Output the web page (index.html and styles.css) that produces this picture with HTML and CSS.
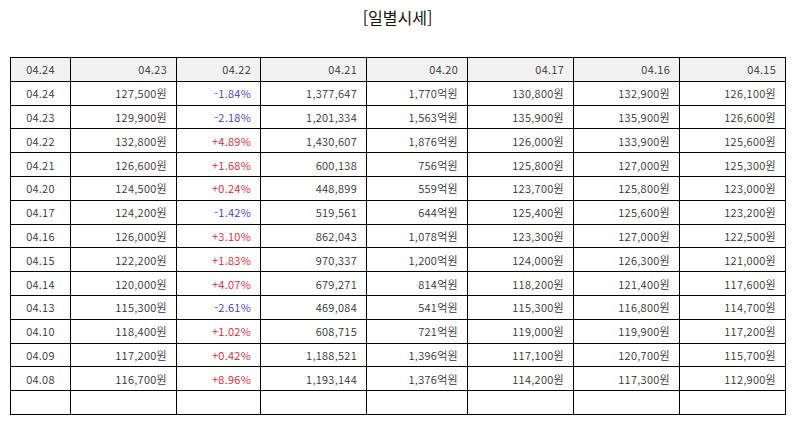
FILE: index.html
```html
<!DOCTYPE html>
<html lang="ko">
<head>
<meta charset="utf-8">
<link rel="stylesheet" href="styles.css">
</head>
<body>
<div class="page">
  <h1 class="title">[일별시세]</h1>
  <table class="prices">
    <colgroup>
      <col style="width:60px"><col style="width:106px"><col style="width:84px"><col style="width:106px"><col style="width:101px"><col style="width:106px"><col style="width:106px"><col style="width:106px">
    </colgroup>
    <thead>
      <tr><th class="c">04.24</th><th>04.23</th><th>04.22</th><th>04.21</th><th>04.20</th><th>04.17</th><th>04.16</th><th>04.15</th></tr>
    </thead>
    <tbody>
      <tr><td class="c">04.24</td><td>127,500원</td><td class="dn">-1.84%</td><td>1,377,647</td><td>1,770억원</td><td>130,800원</td><td>132,900원</td><td>126,100원</td></tr>
      <tr><td class="c">04.23</td><td>129,900원</td><td class="dn">-2.18%</td><td>1,201,334</td><td>1,563억원</td><td>135,900원</td><td>135,900원</td><td>126,600원</td></tr>
      <tr><td class="c">04.22</td><td>132,800원</td><td class="up">+4.89%</td><td>1,430,607</td><td>1,876억원</td><td>126,000원</td><td>133,900원</td><td>125,600원</td></tr>
      <tr><td class="c">04.21</td><td>126,600원</td><td class="up">+1.68%</td><td>600,138</td><td>756억원</td><td>125,800원</td><td>127,000원</td><td>125,300원</td></tr>
      <tr><td class="c">04.20</td><td>124,500원</td><td class="up">+0.24%</td><td>448,899</td><td>559억원</td><td>123,700원</td><td>125,800원</td><td>123,000원</td></tr>
      <tr><td class="c">04.17</td><td>124,200원</td><td class="dn">-1.42%</td><td>519,561</td><td>644억원</td><td>125,400원</td><td>125,600원</td><td>123,200원</td></tr>
      <tr><td class="c">04.16</td><td>126,000원</td><td class="up">+3.10%</td><td>862,043</td><td>1,078억원</td><td>123,300원</td><td>127,000원</td><td>122,500원</td></tr>
      <tr><td class="c">04.15</td><td>122,200원</td><td class="up">+1.83%</td><td>970,337</td><td>1,200억원</td><td>124,000원</td><td>126,300원</td><td>121,000원</td></tr>
      <tr><td class="c">04.14</td><td>120,000원</td><td class="up">+4.07%</td><td>679,271</td><td>814억원</td><td>118,200원</td><td>121,400원</td><td>117,600원</td></tr>
      <tr><td class="c">04.13</td><td>115,300원</td><td class="dn">-2.61%</td><td>469,084</td><td>541억원</td><td>115,300원</td><td>116,800원</td><td>114,700원</td></tr>
      <tr><td class="c">04.10</td><td>118,400원</td><td class="up">+1.02%</td><td>608,715</td><td>721억원</td><td>119,000원</td><td>119,900원</td><td>117,200원</td></tr>
      <tr><td class="c">04.09</td><td>117,200원</td><td class="up">+0.42%</td><td>1,188,521</td><td>1,396억원</td><td>117,100원</td><td>120,700원</td><td>115,700원</td></tr>
      <tr><td class="c">04.08</td><td>116,700원</td><td class="up">+8.96%</td><td>1,193,144</td><td>1,376억원</td><td>114,200원</td><td>117,300원</td><td>112,900원</td></tr>
      <tr><td class="c"></td><td></td><td></td><td></td><td></td><td></td><td></td><td></td></tr>
    </tbody>
  </table>
</div>
</body>
</html>
```
FILE: styles.css
```css
html, body {
  margin: 0;
  padding: 0;
  background: #fff;
}
.page {
  padding: 0 9px 0 10px;
  font-family: "Noto Sans CJK KR", "Noto Sans", sans-serif;
  color: #333;
}
.title {
  margin: 0;
  height: 57px;
  padding-top: 5px;
  box-sizing: border-box;
  text-align: center;
  font-size: 16px;
  font-weight: normal;
  line-height: 24px;
  color: #111;
}
.prices {
  width: 775px;
  border-collapse: collapse;
  table-layout: fixed;
  font-size: 11px;
  letter-spacing: 0.3px;
}
.prices th, .prices td {
  border: 1px solid #000;
  height: 22.8px;
  padding: 0 9px 0 4px;
  text-align: right;
  font-weight: 350;
  line-height: 14px;
  white-space: nowrap;
}
.prices th {
  background: #f2f2f2;
}
.prices .c {
  text-align: center;
  padding: 0;
}
.prices .dn { color: #3a3ad0; }
.prices .up { color: #e0202e; }
```
